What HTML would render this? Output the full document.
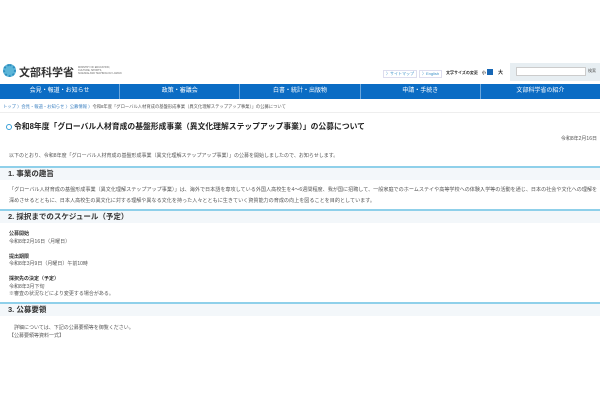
<!DOCTYPE html>
<html><head><meta charset="utf-8"><style>
*{margin:0;padding:0;box-sizing:border-box}
body{width:600px;height:400px;background:#fff;font-family:"Liberation Sans","Noto Sans CJK JP",sans-serif;color:#333;position:relative;overflow:hidden}
.a{position:absolute;white-space:nowrap}
.nav{position:absolute;left:0;top:84px;width:600px;height:15px;background:#0b6cc4;display:flex}
.nav div{flex:1;color:#fff;font-size:6px;text-align:center;line-height:15px;border-right:1px solid #6aa6dc;position:relative}
.nav div:last-child{border:none}
.sec{position:absolute;left:0;width:600px;height:14px;border-top:2px solid #8fd0ea;background:#f3f7fa;font-size:7.5px;font-weight:bold;padding-left:8px;line-height:12px;color:#333}
.t{font-size:5px;color:#555}
</style></head><body>
<div class="a" style="left:3px;top:64px;width:13px;height:13px;border-radius:50%;background:#5bb5d8;border:2px dotted #2e8fc0"></div>
<div class="a" style="left:19px;top:64px;font-size:11px;font-weight:bold;color:#333">文部科学省</div>
<div class="a" style="left:78px;top:66px;font-size:2.5px;line-height:3px;color:#666">MINISTRY OF EDUCATION,<br>CULTURE, SPORTS,<br>SCIENCE AND TECHNOLOGY-JAPAN</div>
<div class="a t" style="left:383px;top:70px;font-size:4px;color:#3a8fc8;border:1px solid #dde;padding:0 2px">〉サイトマップ</div>
<div class="a t" style="left:419px;top:70px;font-size:4px;color:#3a8fc8;border:1px solid #dde;padding:0 2px">〉English</div>
<div class="a" style="left:446px;top:70px;font-size:4px;font-weight:bold;color:#333">文字サイズの変更　小</div>
<div class="a" style="left:487px;top:69px;width:6px;height:6px;background:#1767b5"></div>
<div class="a" style="left:498px;top:69px;font-size:5px;font-weight:bold">大</div>
<div class="a" style="left:510px;top:63px;width:90px;height:18px;background:#e7eef2"></div>
<div class="a" style="left:516px;top:67px;width:70px;height:9px;background:#fff;border:1px solid #ccc"></div>
<div class="a" style="left:588px;top:68px;font-size:4px;color:#555">検索</div>
<div class="nav"><div>会見・報道・お知らせ</div><div>政策・審議会</div><div>白書・統計・出版物</div><div>申請・手続き</div><div>文部科学省の紹介</div></div>
<div class="a" style="left:3px;top:104px;font-size:4.3px;color:#3a7fc0">トップ 〉会見・報道・お知らせ 〉公募情報 〉<span style="color:#555">令和8年度「グローバル人材育成の基盤形成事業（異文化理解ステップアップ事業）」の公募について</span></div>
<div class="a" style="left:0;top:112px;width:600px;height:1px;background:#eee"></div>
<div class="a" style="left:6px;top:124px;width:6px;height:6px;border-radius:50%;border:1.5px solid #3aa0d8"></div>
<div class="a" style="left:14px;top:121px;font-size:7.8px;font-weight:bold;color:#222">令和8年度「グローバル人材育成の基盤形成事業（異文化理解ステップアップ事業）」の公募について</div>
<div class="a t" style="right:3px;top:135px">令和8年2月16日</div>
<div class="a t" style="left:9px;top:152px">以下のとおり、令和8年度「グローバル人材育成の基盤形成事業（異文化理解ステップアップ事業）」の公募を開始しましたので、お知らせします。</div>
<div class="sec" style="top:166px">1. 事業の趣旨</div>
<div class="a t" style="left:9px;top:185px;line-height:11px;font-size:5.1px">「グローバル人材育成の基盤形成事業（異文化理解ステップアップ事業）」は、海外で日本語を専攻している外国人高校生を4～6週間程度、我が国に招聘して、一般家庭でのホームステイや高等学校への体験入学等の活動を通じ、日本の社会や文化への理解を<br>深めさせるとともに、日本人高校生の異文化に対する理解や異なる文化を持った人々とともに生きていく資質能力の育成の向上を図ることを目的としています。</div>
<div class="sec" style="top:209px">2. 採択までのスケジュール（予定）</div>
<div class="a t" style="left:9px;top:231px;line-height:7.5px"><b style="color:#333">公募開始</b><br>令和8年2月16日（月曜日）<br><br><b style="color:#333">提出期限</b><br>令和8年3月9日（月曜日）午前10時<br><br><b style="color:#333">採択先の決定（予定）</b><br>令和8年3月下旬<br>※審査の状況などにより変更する場合がある。</div>
<div class="sec" style="top:302px">3. 公募要領</div>
<div class="a t" style="left:9px;top:325px;line-height:7.5px">　詳細については、下記の公募要領等を御覧ください。<br>【公募要領等資料一式】</div>
</body></html>
